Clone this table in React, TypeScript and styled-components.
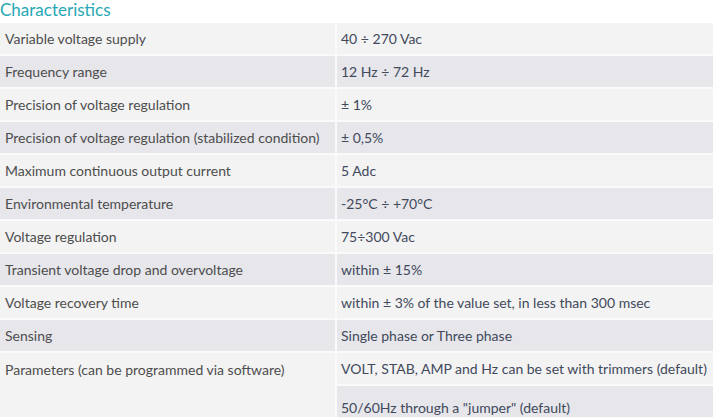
import styled, { createGlobalStyle } from "styled-components";

const GlobalStyle = createGlobalStyle`
  body {
    margin: 0;
    background: #ffffff;
    font-family: Lato, "Open Sans", sans-serif;
    overflow: hidden;
  }
`;

const Wrapper = styled("div")`
  width: 713px;
`;

const Title = styled("h3")`
  margin: 0;
  height: 23px;
  font-size: 17px;
  line-height: 20px;
  font-weight: 400;
  color: #27a8b4;
`;

const Table = styled("table")`
  width: 713px;
  border-collapse: collapse;
  table-layout: fixed;
  font-size: 14px;
`;

const Row = styled("tr")<{ $alt?: boolean }>`
  background: ${({ $alt }) => ($alt ? "#e6e6eb" : "#f3f3f3")};
`;

const Label = styled("td")`
  width: 336px;
  height: 31px;
  padding: 0 0 0 5px;
  box-sizing: border-box;
  color: #4d4d4d;
  border-bottom: 2px solid #fafafa;
  border-right: 2px solid #fafafa;
  vertical-align: middle;
  white-space: nowrap;
`;

const Value = styled("td")<{ $last?: boolean }>`
  height: 31px;
  padding: ${({ $last }) => ($last ? "6px 0 4px 4px" : "0 0 0 4px")};
  color: #41495b;
  border-bottom: 2px solid #fafafa;
  vertical-align: middle;
  white-space: nowrap;
`;

const ParamLabel = styled(Label)`
  vertical-align: top;
  padding-top: 8px;
  background: #f3f3f3;
`;

type Spec = { label: string; value: string };

const specs: Spec[] = [
  { label: "Variable voltage supply", value: "40 ÷ 270 Vac" },
  { label: "Frequency range", value: "12 Hz ÷ 72 Hz" },
  { label: "Precision of voltage regulation", value: "± 1%" },
  {
    label: "Precision of voltage regulation (stabilized condition)",
    value: "± 0,5%",
  },
  { label: "Maximum continuous output current", value: "5 Adc" },
  { label: "Environmental temperature", value: "-25°C ÷ +70°C" },
  { label: "Voltage regulation", value: "75÷300 Vac" },
  { label: "Transient voltage drop and overvoltage", value: "within ± 15%" },
  {
    label: "Voltage recovery time",
    value: "within ± 3% of the value set, in less than 300 msec",
  },
  { label: "Sensing", value: "Single phase or Three phase" },
];

export default function App() {
  return (
    <Wrapper>
      <GlobalStyle />
      <Title>Characteristics</Title>
      <Table>
        <tbody>
          {specs.map((spec, i) => (
            <Row key={spec.label} $alt={i % 2 === 1}>
              <Label>{spec.label}</Label>
              <Value>{spec.value}</Value>
            </Row>
          ))}
          <Row>
            <ParamLabel rowSpan={2}>
              Parameters (can be programmed via software)
            </ParamLabel>
            <Value>
              VOLT, STAB, AMP and Hz can be set with trimmers (default)
            </Value>
          </Row>
          <Row $alt>
            <Value $last>50/60Hz through a "jumper" (default)</Value>
          </Row>
        </tbody>
      </Table>
    </Wrapper>
  );
}
